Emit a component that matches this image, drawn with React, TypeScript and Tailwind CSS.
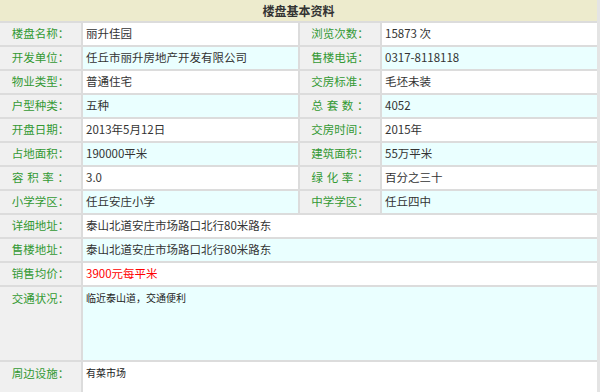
import React from "react";

const FONT = { fontFamily: '"Noto Sans CJK SC", "Noto Sans", sans-serif' };

function Label({ text, spaced }: { text: string; spaced?: boolean }) {
  if (spaced) {
    const chars = text.replace(/\s/g, "").split("");
    return (
      <div className="bg-[#f0f0f0] flex items-center justify-center text-[#339933] text-[11.5px]">
        <span className="inline-flex w-[57px] justify-between">
          {chars.map((c, i) => (
            <span key={i}>{c}</span>
          ))}
        </span>
      </div>
    );
  }
  return (
    <div className="bg-[#f0f0f0] flex items-center justify-center text-[#339933] text-[11.5px] whitespace-nowrap">
      {text}
    </div>
  );
}

function Value({ text, cyan, red }: { text: string; cyan?: boolean; red?: boolean }) {
  return (
    <div
      className={`${cyan ? "bg-[#eaffff]" : "bg-white"} ${red ? "text-[#ff0000]" : "text-[#333333]"} flex items-center pl-[3px] text-[11.5px] whitespace-nowrap`}
    >
      {text}
    </div>
  );
}

type Pair = { l: string; v: string; sp?: boolean };

const pairs: [Pair, Pair][] = [
  [{ l: "楼盘名称：", v: "丽升佳园" }, { l: "浏览次数：", v: "15873 次" }],
  [{ l: "开发单位：", v: "任丘市丽升房地产开发有限公司" }, { l: "售楼电话：", v: "0317-8118118" }],
  [{ l: "物业类型：", v: "普通住宅" }, { l: "交房标准：", v: "毛坯未装" }],
  [{ l: "户型种类：", v: "五种" }, { l: "总套数：", v: "4052", sp: true }],
  [{ l: "开盘日期：", v: "2013年5月12日" }, { l: "交房时间：", v: "2015年" }],
  [{ l: "占地面积：", v: "190000平米" }, { l: "建筑面积：", v: "55万平米" }],
  [{ l: "容积率：", v: "3.0", sp: true }, { l: "绿化率：", v: "百分之三十", sp: true }],
  [{ l: "小学学区：", v: "任丘安庄小学" }, { l: "中学学区：", v: "任丘四中" }],
];

export default function App() {
  return (
    <div className="w-[600px] h-[392px] overflow-hidden bg-white" style={FONT}>
      <div className="w-[600px] bg-[#dcdcdc] border-r-[3px] border-[#e4e4e4] flex flex-col gap-[2px]">
        <div className="h-[21px] bg-[#edebcd] flex items-center justify-center text-[12px] font-bold text-[#333333]">
          楼盘基本资料
        </div>
        {pairs.map((p, i) => {
          const cyan = i % 2 === 1;
          return (
            <div key={i} className="h-[22px] grid grid-cols-[81px_215px_80px_215px] gap-x-[2px]">
              <Label text={p[0].l} spaced={p[0].sp} />
              <Value text={p[0].v} cyan={cyan} />
              <Label text={p[1].l} spaced={p[1].sp} />
              <Value text={p[1].v} cyan={cyan} />
            </div>
          );
        })}
        <div className="h-[22px] grid grid-cols-[81px_1fr] gap-x-[2px]">
          <Label text="详细地址：" />
          <Value text="泰山北道安庄市场路口北行80米路东" />
        </div>
        <div className="h-[22px] grid grid-cols-[81px_1fr] gap-x-[2px]">
          <Label text="售楼地址：" />
          <Value text="泰山北道安庄市场路口北行80米路东" cyan />
        </div>
        <div className="h-[22px] grid grid-cols-[81px_1fr] gap-x-[2px]">
          <Label text="销售均价：" />
          <Value text="3900元每平米" red />
        </div>
        <div className="h-[73px] grid grid-cols-[81px_1fr] gap-x-[2px]">
          <div className="bg-[#f0f0f0] flex justify-center pt-[1px] leading-[20px] text-[#339933] text-[11.5px]">
            交通状况：
          </div>
          <div className="bg-[#eaffff] pl-[3px] pt-[2px] leading-[18px] text-[10px] text-[#222222]">
            临近泰山道，交通便利
          </div>
        </div>
        <div className="h-[60px] grid grid-cols-[81px_1fr] gap-x-[2px]">
          <div className="bg-[#f0f0f0] flex justify-center pt-[1px] leading-[20px] text-[#339933] text-[11.5px]">
            周边设施：
          </div>
          <div className="bg-white pl-[3px] pt-[2px] leading-[18px] text-[10px] text-[#222222]">
            有菜市场
          </div>
        </div>
      </div>
    </div>
  );
}
